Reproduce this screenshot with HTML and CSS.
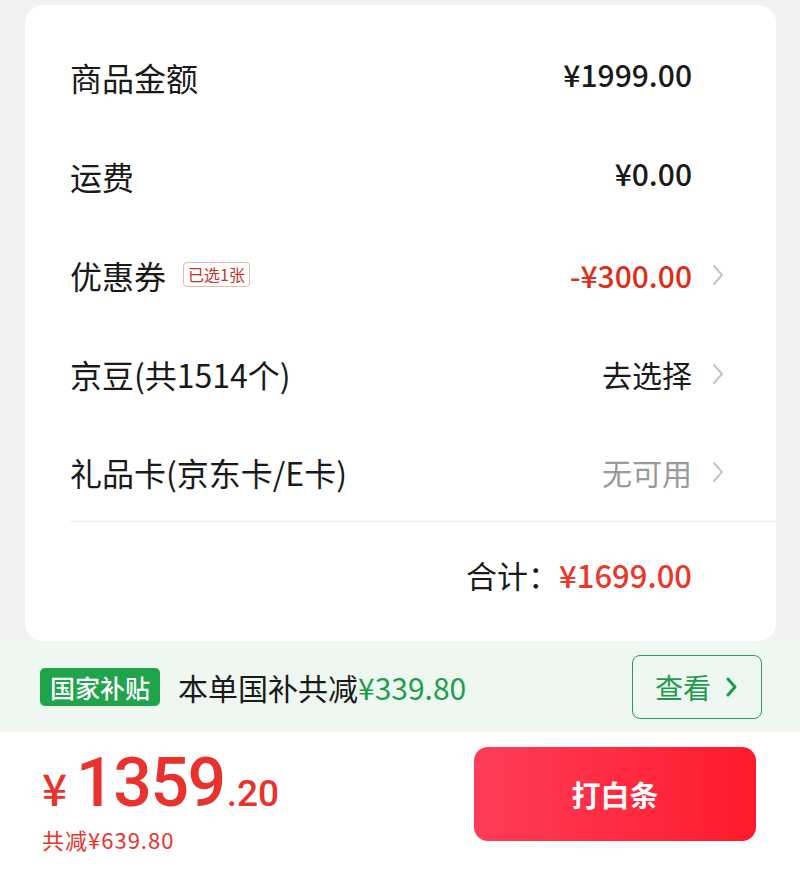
FILE: index.html
```html
<!DOCTYPE html>
<html lang="zh-CN">
	<head>
		<meta charset="utf-8">
		<meta name="viewport" content="width=device-width, initial-scale=1.0">
		<title>订单结算</title>
		<link rel="stylesheet" href="styles.css">
	</head>
	<body>
		<div class="page">
			<div class="card">
				<div class="row">
					<span class="label">商品金额</span>
					<span class="value num">¥1999.00</span>
					<span class="arrow"></span>
				</div>
				<div class="row">
					<span class="label">运费</span>
					<span class="value num">¥0.00</span>
					<span class="arrow"></span>
				</div>
				<div class="row">
					<span class="label">优惠券<span class="tag">已选1张</span></span>
					<span class="value num red">-¥300.00</span>
					<span class="arrow"><svg width="12" height="22" viewBox="0 0 12 22"><polyline points="2,2 10,11 2,20" fill="none" stroke="#c4c4c4" stroke-width="2" stroke-linecap="round" stroke-linejoin="round"/></svg></span>
				</div>
				<div class="row">
					<span class="label">京豆(共1514个)</span>
					<span class="value">去选择</span>
					<span class="arrow"><svg width="12" height="22" viewBox="0 0 12 22"><polyline points="2,2 10,11 2,20" fill="none" stroke="#c4c4c4" stroke-width="2" stroke-linecap="round" stroke-linejoin="round"/></svg></span>
				</div>
				<div class="row">
					<span class="label">礼品卡(京东卡/E卡)</span>
					<span class="value gray">无可用</span>
					<span class="arrow"><svg width="12" height="22" viewBox="0 0 12 22"><polyline points="2,2 10,11 2,20" fill="none" stroke="#c4c4c4" stroke-width="2" stroke-linecap="round" stroke-linejoin="round"/></svg></span>
				</div>
				<div class="total">
					<span class="total-label">合计：</span>
					<span class="total-value">¥1699.00</span>
				</div>
			</div>
		</div>
		<div class="subsidy">
			<span class="badge">国家补贴</span>
			<span class="subsidy-text">本单国补共减<span class="green">¥339.80</span></span>
			<span class="look">查看<svg width="14" height="22" viewBox="0 0 14 22"><polyline points="3,3 10,11 3,19" fill="none" stroke="#1f9a4d" stroke-width="3" stroke-linecap="round" stroke-linejoin="round"/></svg></span>
		</div>
		<div class="footer">
			<div class="price">
				<div class="amount"><span class="yen">¥</span><span class="int">1359</span><span class="dec">.20</span></div>
				<div class="saved">共减¥639.80</div>
			</div>
			<button class="pay">打白条</button>
		</div>
	</body>
</html>
```

FILE: styles.css
```css
* { box-sizing: border-box }
html, body { margin: 0; padding: 0 }
body { width: 800px; height: 870px; background: #fff; font-family: "Noto Sans CJK SC", "Noto Sans", sans-serif; color: #1a1a1a; display: flex; flex-direction: column }

.page { background: #f2f2f2; padding: 5px 24px 0 25px }
.card { background: #fff; border-radius: 18px; padding: 22px 0 15px 45px }
.row { display: flex; align-items: center; height: 99px; padding-right: 52px }
.label { font-size: 32px; flex: 1; display: flex; align-items: center }
.tag { font-size: 16px; color: #c8342a; border: 1px solid #e6b7b0; border-radius: 4px; padding: 0 4px; line-height: 23px; margin-left: 17px }
.value { font-size: 30px }
.num { font-weight: 500 }
.red { color: #dd2e1c }
.gray { color: #9a9a9a }
.arrow { width: 32px; display: flex; justify-content: flex-end }
.row:nth-child(-n+2) .value { margin-top: -6px }
.row:nth-child(5) { border-bottom: 1px solid #eeeeee }
.total { display: flex; justify-content: flex-end; align-items: center; height: 104px; padding-right: 84px; font-size: 31px }
.total-value { color: #e8392b; font-weight: 500 }

.subsidy { background: #eef8f1; height: 91px; display: flex; align-items: center; padding: 0 38px 0 40px }
.badge { background: #1ea44b; color: #fff; font-size: 25px; font-weight: 500; border-radius: 5px; height: 38px; line-height: 38px; padding: 0 10px; margin-right: 18px }
.subsidy-text { font-size: 30px; flex: 1 }
.green { color: #1f9d4b }
.look { width: 130px; height: 64px; border: 1.5px solid #2a9a55; border-radius: 8px; color: #1f9a4d; font-size: 28px; display: flex; align-items: center; justify-content: center; gap: 14px }

.footer { flex: 1; display: flex; align-items: flex-start; justify-content: space-between; padding: 17px 44px 0 42px }
.price { color: #e8322e }
.amount { display: flex; align-items: baseline; font-family: Roboto, "Noto Sans CJK SC", sans-serif; line-height: 1 }
.yen { font-size: 44px; font-weight: 500; margin-right: 9px; font-family: "Noto Sans CJK SC", sans-serif }
.int { font-size: 68px; font-weight: 500; letter-spacing: -1.5px }
.dec { font-size: 37px; font-weight: 500; margin-left: 2px }
.saved { font-size: 22px; letter-spacing: 1px; margin-top: 7px; line-height: 1.4 }
.pay { width: 282px; height: 94px; margin-top: -2px; border: 0; border-radius: 14px; background: linear-gradient(90deg, #ff3d58, #ff1a2c); color: #fff; font-family: inherit; font-size: 29px; font-weight: 700 }
```
